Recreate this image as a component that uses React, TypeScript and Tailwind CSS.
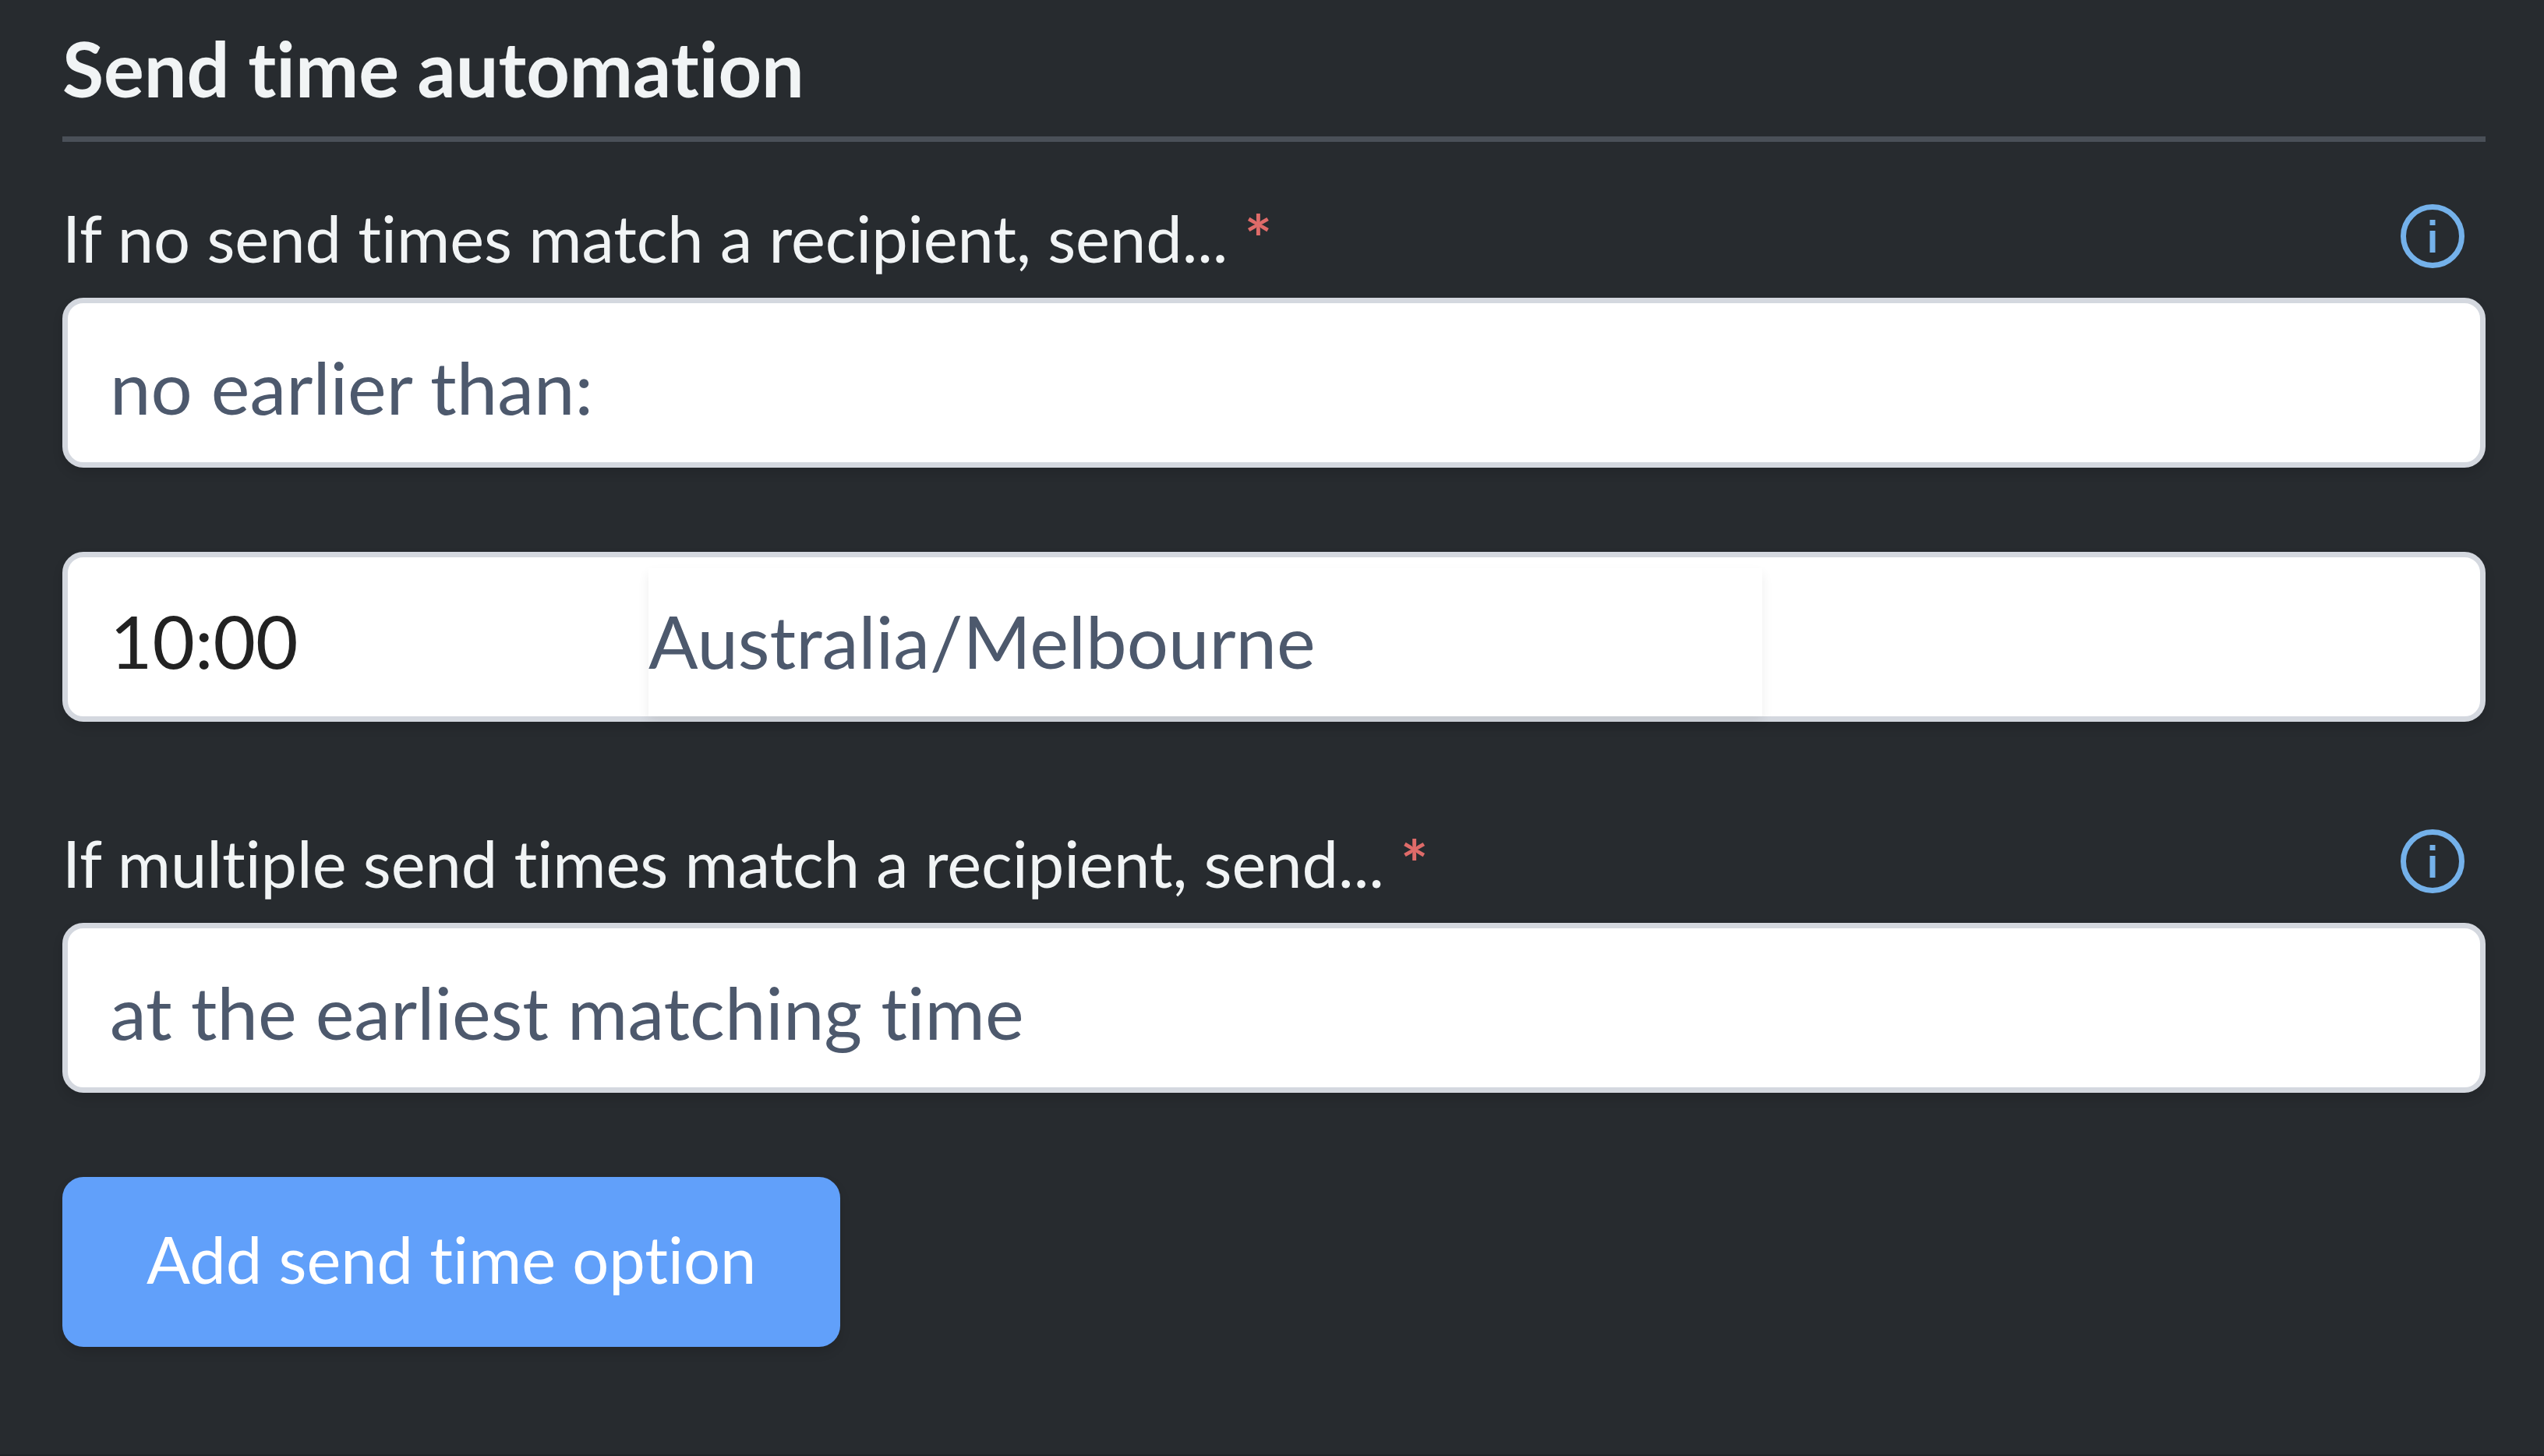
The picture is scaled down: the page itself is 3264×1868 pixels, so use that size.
import { useId, useState, type ReactNode } from "react";

const box =
  "h-[218px] w-full rounded-[27px] border-[7px] border-[#d4d8df] bg-white shadow-[0_7px_14px_rgba(0,0,0,0.12)]";

function InfoIcon() {
  return (
    <svg viewBox="0 0 82 82" className="size-[82px]" aria-hidden="true">
      <circle cx="41" cy="41" r="37.5" fill="none" stroke="currentColor" strokeWidth="7" />
      <rect x="37.5" y="20" width="7" height="7" fill="currentColor" />
      <rect x="37.5" y="34" width="7" height="28" fill="currentColor" />
    </svg>
  );
}

function FieldLabel({ htmlFor, children }: { htmlFor: string; children: ReactNode }) {
  return (
    <div className="mb-[26px] flex items-start justify-between pr-[27px]">
      <label htmlFor={htmlFor} className="text-[83px] leading-[102px]">
        {children} <span className="font-bold text-[#df6b69]">*</span>
      </label>
      <button type="button" aria-label="More information" className="mt-2 text-[#74b1ea]">
        <InfoIcon />
      </button>
    </div>
  );
}

function SelectBox({ id, options }: { id: string; options: string[] }) {
  return (
    <select
      id={id}
      className={`${box} block appearance-none px-[54px] pt-2 text-[94px] text-[#4d596d]`}
    >
      {options.map((option) => (
        <option key={option}>{option}</option>
      ))}
    </select>
  );
}

export default function App() {
  const id = useId();
  const [time, setTime] = useState("10:00");

  return (
    <main className="min-h-screen border-b-2 border-[#1f2327] bg-[#272b2f] pt-7 pr-[75px] pb-20 pl-20 font-['Lato',sans-serif] text-[#f1f4f5] [font-variant-ligatures:none]">
      <h2 className="mb-[72px] border-b-[7px] border-[#4a5058] pb-[27px] text-[97px] leading-[120px] font-bold">
        Send time automation
      </h2>
      <form onSubmit={(event) => event.preventDefault()}>
        <FieldLabel htmlFor={`${id}-none`}>If no send times match a recipient, send...</FieldLabel>
        <SelectBox id={`${id}-none`} options={["no earlier than:", "no later than:"]} />

        <div
          className={`${box} mt-[108px] mb-[130px] grid grid-cols-[745fr_1429fr_921fr] text-[94px]`}
        >
          <input
            type="text"
            aria-label="Time"
            value={time}
            onChange={(event) => setTime(event.target.value)}
            className="min-w-0 bg-transparent pt-2 pl-[54px] text-[#222222]"
          />
          <select
            aria-label="Time zone"
            className="mt-[14px] min-w-0 appearance-none bg-white pb-[6px] text-[#4d596d] shadow-[0_7px_14px_rgba(0,0,0,0.07)]"
          >
            <option>Australia/Melbourne</option>
            <option>Australia/Sydney</option>
          </select>
        </div>

        <FieldLabel htmlFor={`${id}-many`}>
          If multiple send times match a recipient, send...
        </FieldLabel>
        <SelectBox
          id={`${id}-many`}
          options={["at the earliest matching time", "at the latest matching time"]}
        />

        <button
          type="button"
          className="mt-[108px] h-[218px] rounded-[27px] bg-[#61a0fa] px-[108px] pb-2 text-[83px] text-white shadow-[0_7px_14px_rgba(0,0,0,0.12)]"
        >
          Add send time option
        </button>
      </form>
    </main>
  );
}
